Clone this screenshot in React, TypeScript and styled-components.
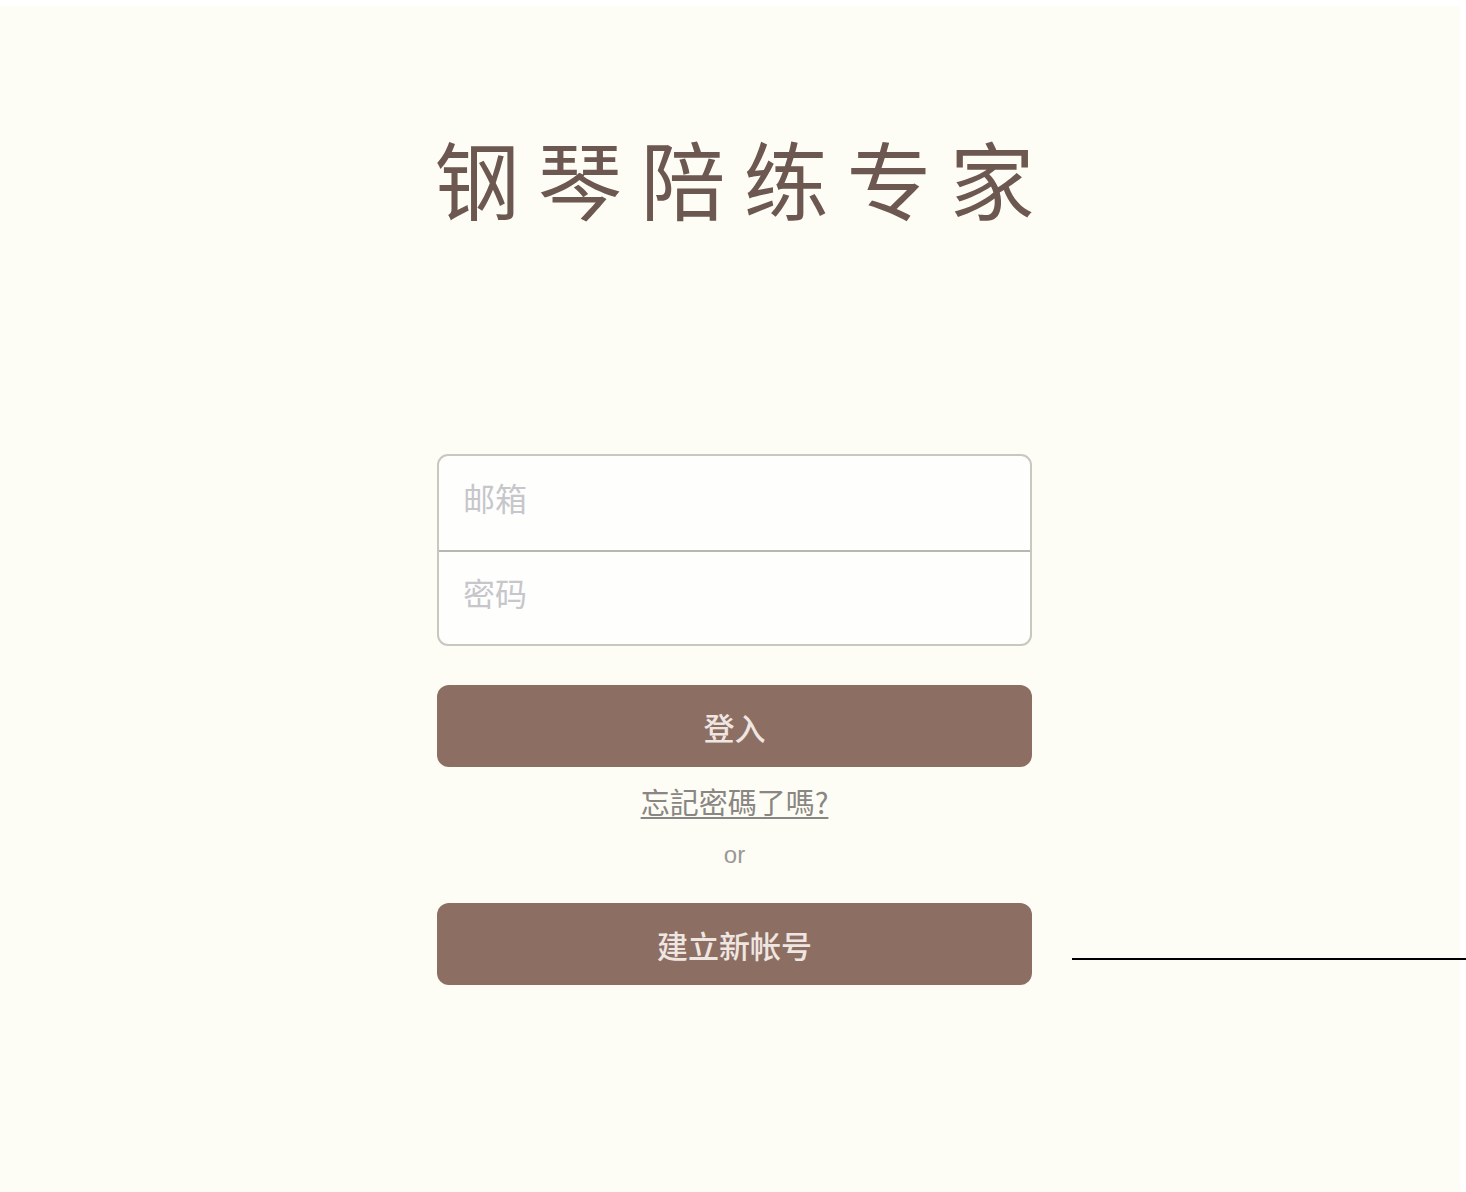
import React from "react";
import styled, { createGlobalStyle } from "styled-components";

const Global = createGlobalStyle`
  html, body { margin: 0; padding: 0; background: #ffffff; }
  body { font-family: "Noto Sans CJK SC", "Noto Sans", sans-serif; }
  * { box-sizing: border-box; }
`;

const Page = styled.div`
  position: relative;
  margin-top: 6px;
  width: 1460px;
  height: 1186px;
  background: #fdfdf5;
  display: flex;
  flex-direction: column;
  align-items: center;
  padding-left: 9px;
`;

const Title = styled.h1`
  margin: 111px -18px 0 0;
  font-family: "Noto Sans CJK SC", sans-serif;
  font-weight: 400;
  font-size: 85px;
  line-height: 1.4;
  letter-spacing: 18px;
  color: #6c5850;
`;

const Form = styled.form`
  width: 595px;
  margin-top: 218px;
  display: flex;
  flex-direction: column;
  align-items: center;
`;

const FieldGroup = styled.div`
  width: 100%;
  border: 2px solid #c9c8c0;
  border-radius: 11px;
  background: #fefefd;
  overflow: hidden;
  display: flex;
  flex-direction: column;
`;

const Field = styled.input<{ $divider?: boolean }>`
  height: 94px;
  border: none;
  border-top: ${(p) => (p.$divider ? "2px solid #b8b7b0" : "none")};
  background: transparent;
  padding: 0 24px 12px;
  font-family: "Noto Sans CJK SC", sans-serif;
  font-size: 32px;
  color: #444;
  outline: none;
  &::placeholder { color: #c6c6cb; }
`;

const Button = styled.button<{ $mt: number }>`
  width: 100%;
  height: 82px;
  margin-top: ${(p) => p.$mt}px;
  border: none;
  border-radius: 12px;
  background: #8c6e63;
  color: #efe6e2;
  font-family: "Noto Sans CJK SC", sans-serif;
  font-size: 31px;
  font-weight: 500;
  cursor: pointer;
`;

const Forgot = styled.a`
  margin-top: 18px;
  font-family: "Noto Sans CJK TC", "Noto Sans CJK SC", sans-serif;
  font-size: 29px;
  line-height: 32px;
  color: #8a8683;
  text-decoration: underline;
  text-decoration-thickness: 2px;
  text-underline-offset: 3px;
`;

const Or = styled.span`
  margin-top: 24px;
  font-family: "Liberation Sans", Arial, sans-serif;
  font-size: 24px;
  line-height: 28px;
  color: #9a9896;
`;

const Rule = styled.div`
  position: absolute;
  left: 1072px;
  top: 952px;
  width: 394px;
  height: 2px;
  background: #000;
`;

export default function App() {
  return (
    <>
      <Global />
      <Page>
        <Title>钢琴陪练专家</Title>
        <Form onSubmit={(e) => e.preventDefault()}>
          <FieldGroup>
            <Field type="email" placeholder="邮箱" />
            <Field type="password" placeholder="密码" $divider />
          </FieldGroup>
          <Button type="submit" $mt={39}>登入</Button>
          <Forgot href="#">忘記密碼了嗎?</Forgot>
          <Or>or</Or>
          <Button type="button" $mt={34}>建立新帐号</Button>
        </Form>
        <Rule />
      </Page>
    </>
  );
}
